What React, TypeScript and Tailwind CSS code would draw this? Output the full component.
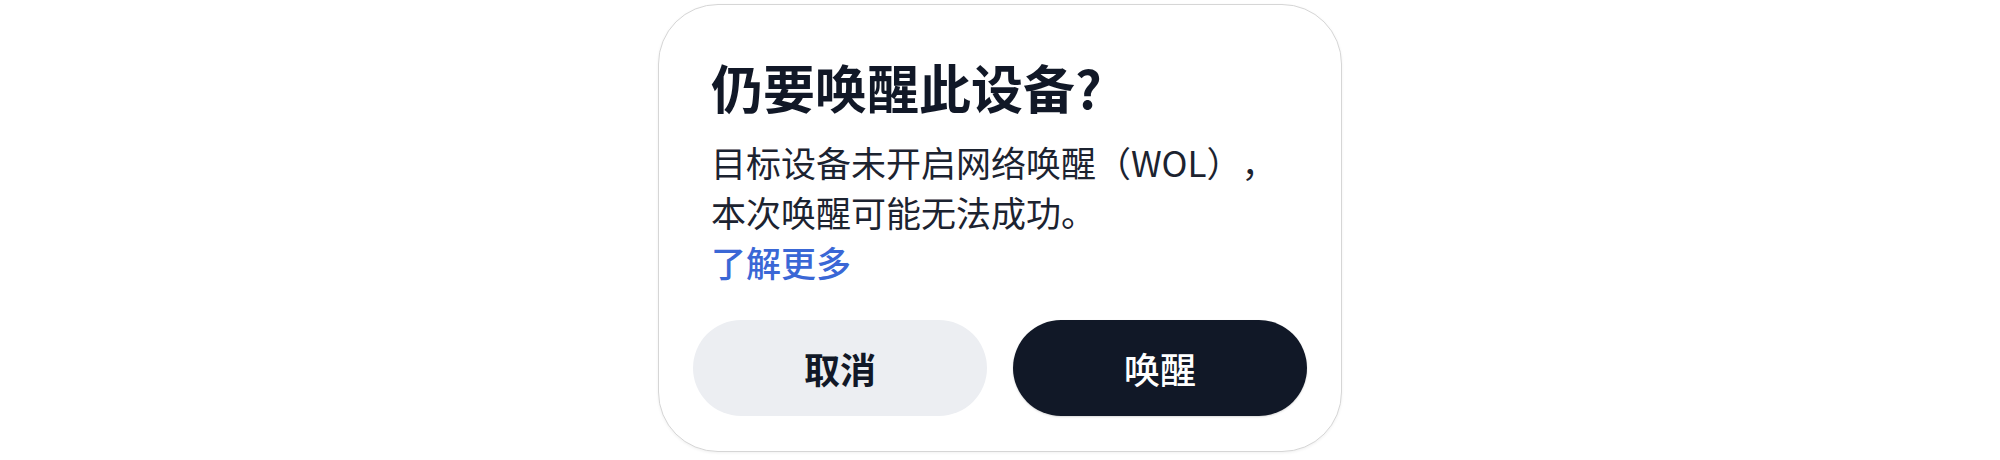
export default function App() {
  return (
    <div
      className="w-[2000px] h-[460px] bg-white flex justify-center pt-[4px] [text-spacing-trim:space-all]"
      style={{ fontFamily: '"Noto Sans CJK SC", "Noto Sans", sans-serif' }}
    >
      <div className="w-[684px] h-[448px] rounded-[60px] border border-[#d6d6d6] bg-white shadow-[0_1px_3px_rgba(0,0,0,0.06)] flex flex-col px-[34px] pt-[50px] pb-[35px]">
        <div className="px-[18px]">
          <h1 className="text-[52px] leading-[64px] font-bold text-[#111827]">
            仍要唤醒此设备?
          </h1>
          <p className="mt-[18px] text-[35px] leading-[50px] text-[#1c2330]">
            目标设备未开启网络唤醒（WOL），
            <br />
            本次唤醒可能无法成功。
          </p>
          <a className="block text-[35px] leading-[50px] font-medium text-[#3a67d6]">了解更多</a>
        </div>
        <div className="mt-auto flex gap-[26px]">
          <button className="flex-1 h-[96px] rounded-full bg-[#eceef2] text-[36px] font-semibold text-[#111827]">
            取消
          </button>
          <button className="flex-1 h-[96px] rounded-full bg-[#111827] text-[36px] font-medium text-white shadow-[0_1px_2px_rgba(0,0,0,0.15)]">
            唤醒
          </button>
        </div>
      </div>
    </div>
  );
}
